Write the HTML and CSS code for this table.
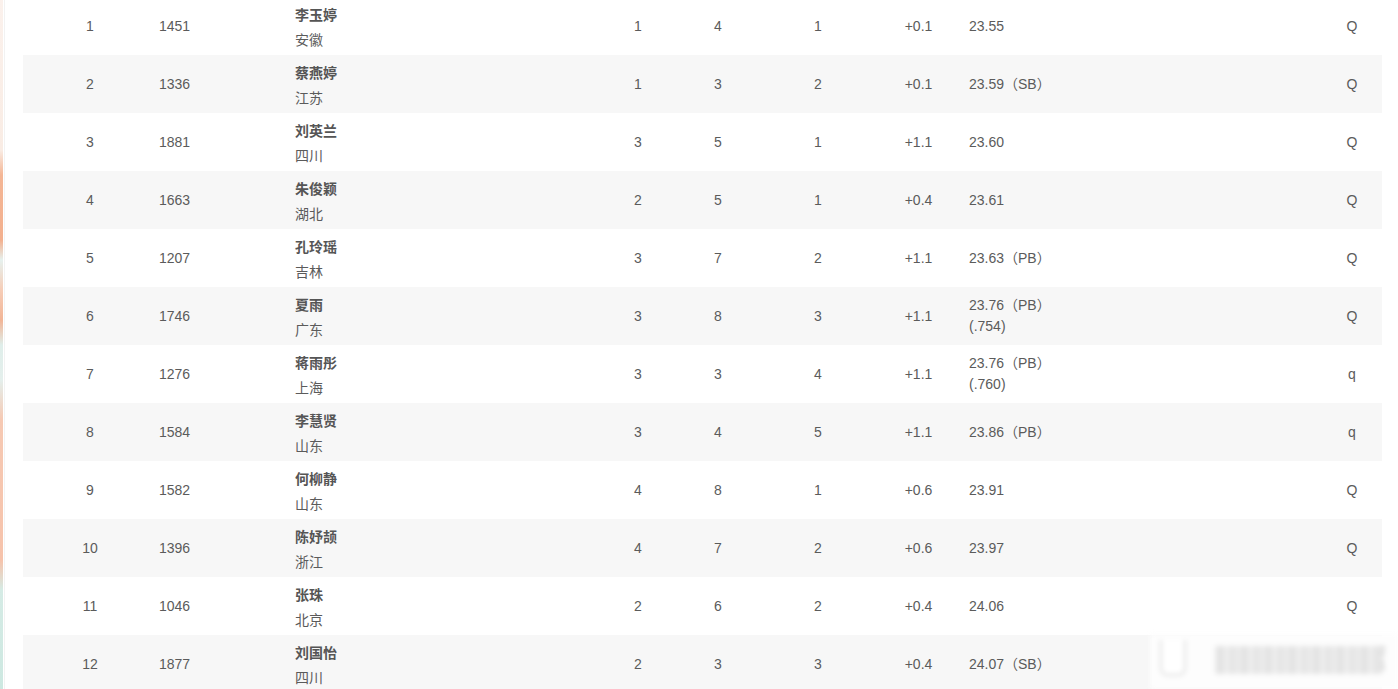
FILE: index.html
```html
<!DOCTYPE html>
<html lang="zh-CN">
<head>
<meta charset="utf-8">
<title>成绩</title>
<link rel="stylesheet" href="styles.css">
</head>
<body>
<div class="edge"></div>
<div class="page">
  <div class="table">
    <div class="row"><div class="c rank">1</div><div class="c bib">1451</div><div class="c name"><div class="nm">李玉婷</div><div class="team">安徽</div></div><div class="c">1</div><div class="c">4</div><div class="c">1</div><div class="c">+0.1</div><div class="c res">23.55</div><div class="c"></div><div class="c qual">Q</div></div>
    <div class="row"><div class="c rank">2</div><div class="c bib">1336</div><div class="c name"><div class="nm">蔡燕婷</div><div class="team">江苏</div></div><div class="c">1</div><div class="c">3</div><div class="c">2</div><div class="c">+0.1</div><div class="c res">23.59（SB）</div><div class="c"></div><div class="c qual">Q</div></div>
    <div class="row"><div class="c rank">3</div><div class="c bib">1881</div><div class="c name"><div class="nm">刘英兰</div><div class="team">四川</div></div><div class="c">3</div><div class="c">5</div><div class="c">1</div><div class="c">+1.1</div><div class="c res">23.60</div><div class="c"></div><div class="c qual">Q</div></div>
    <div class="row"><div class="c rank">4</div><div class="c bib">1663</div><div class="c name"><div class="nm">朱俊颖</div><div class="team">湖北</div></div><div class="c">2</div><div class="c">5</div><div class="c">1</div><div class="c">+0.4</div><div class="c res">23.61</div><div class="c"></div><div class="c qual">Q</div></div>
    <div class="row"><div class="c rank">5</div><div class="c bib">1207</div><div class="c name"><div class="nm">孔玲瑶</div><div class="team">吉林</div></div><div class="c">3</div><div class="c">7</div><div class="c">2</div><div class="c">+1.1</div><div class="c res">23.63（PB）</div><div class="c"></div><div class="c qual">Q</div></div>
    <div class="row"><div class="c rank">6</div><div class="c bib">1746</div><div class="c name"><div class="nm">夏雨</div><div class="team">广东</div></div><div class="c">3</div><div class="c">8</div><div class="c">3</div><div class="c">+1.1</div><div class="c res">23.76（PB）(.754)</div><div class="c"></div><div class="c qual">Q</div></div>
    <div class="row"><div class="c rank">7</div><div class="c bib">1276</div><div class="c name"><div class="nm">蒋雨彤</div><div class="team">上海</div></div><div class="c">3</div><div class="c">3</div><div class="c">4</div><div class="c">+1.1</div><div class="c res">23.76（PB）(.760)</div><div class="c"></div><div class="c qual">q</div></div>
    <div class="row"><div class="c rank">8</div><div class="c bib">1584</div><div class="c name"><div class="nm">李慧贤</div><div class="team">山东</div></div><div class="c">3</div><div class="c">4</div><div class="c">5</div><div class="c">+1.1</div><div class="c res">23.86（PB）</div><div class="c"></div><div class="c qual">q</div></div>
    <div class="row"><div class="c rank">9</div><div class="c bib">1582</div><div class="c name"><div class="nm">何柳静</div><div class="team">山东</div></div><div class="c">4</div><div class="c">8</div><div class="c">1</div><div class="c">+0.6</div><div class="c res">23.91</div><div class="c"></div><div class="c qual">Q</div></div>
    <div class="row"><div class="c rank">10</div><div class="c bib">1396</div><div class="c name"><div class="nm">陈妤颉</div><div class="team">浙江</div></div><div class="c">4</div><div class="c">7</div><div class="c">2</div><div class="c">+0.6</div><div class="c res">23.97</div><div class="c"></div><div class="c qual">Q</div></div>
    <div class="row"><div class="c rank">11</div><div class="c bib">1046</div><div class="c name"><div class="nm">张珠</div><div class="team">北京</div></div><div class="c">2</div><div class="c">6</div><div class="c">2</div><div class="c">+0.4</div><div class="c res">24.06</div><div class="c"></div><div class="c qual">Q</div></div>
    <div class="row"><div class="c rank">12</div><div class="c bib">1877</div><div class="c name"><div class="nm">刘国怡</div><div class="team">四川</div></div><div class="c">2</div><div class="c">3</div><div class="c">3</div><div class="c">+0.4</div><div class="c res">24.07（SB）</div><div class="c"></div><div class="c qual">Q</div></div>
  </div>
</div>
<div class="watermark">
  <div class="wm-pill"></div>
  <div class="wm-bars"></div>
  <div class="wm-digits"><span>2</span><span>1</span></div>
</div>
</body>
</html>
```
FILE: styles.css
```css
html, body {
  margin: 0;
  padding: 0;
  background: #ffffff;
  overflow: hidden;
}
body {
  font-family: "Liberation Sans", "Noto Sans CJK SC", sans-serif;
  font-size: 14px;
  color: #5b5b5b;
  height: 689px;
  position: relative;
}
.edge {
  position: absolute;
  left: 0;
  top: 0;
  width: 3px;
  height: 689px;
  background: linear-gradient(to bottom,
    #fbf1ec 0px, #f9ece4 150px, #f4b695 175px, #f3b08e 240px,
    #e6f1ee 260px, #f6cdb7 290px, #f2b596 320px, #dfeeea 345px,
    #e4efec 380px, #f6c9b3 420px, #f6c3ab 560px, #d5ebe5 590px,
    #cde8e1 689px);
}
.edge::after {
  content: "";
  position: absolute;
  left: 4px;
  top: 0;
  width: 1px;
  height: 100%;
  background: #f2f2f2;
}
.page {
  padding-left: 23px;
  margin-top: -3px;
}
.table {
  width: 1359px;
}
.row {
  display: grid;
  grid-template-columns: 134px 138px 295px 96px 64px 136px 65px 108px 1fr 62px;
  height: 58px;
  align-items: center;
  background: #ffffff;
}
.row:nth-child(even) {
  background: #f7f7f7;
}
.c {
  text-align: center;
  line-height: 21px;
}
.bib {
  text-align: left;
  padding-left: 2px;
}
.name {
  text-align: left;
  padding-top: 3px;
}
.nm {
  font-weight: 700;
  line-height: 25px;
  color: #555555;
}
.team {
  line-height: 25px;
}
.res {
  text-align: left;
  padding-left: 18px;
  padding-right: 12px;
}
.qual {
  padding-left: 2px;
}
.watermark {
  position: absolute;
  left: 1150px;
  top: 634px;
  width: 248px;
  height: 55px;
  background: #fdfdfd;
  filter: blur(2.5px);
}
.wm-pill {
  position: absolute;
  left: 10px;
  top: 6px;
  width: 22px;
  height: 34px;
  background: #ffffff;
  border: 2px solid #e0e0e0;
  border-top: none;
  border-radius: 0 0 8px 8px;
}
.wm-bars {
  position: absolute;
  left: 65px;
  top: 12px;
  width: 168px;
  height: 28px;
  background: repeating-linear-gradient(to right,
    #ebebeb 0px, #e0e0e0 6px, #f0f0f0 11px, #e3e3e3 17px, #eeeeee 24px);
}
.wm-digits {
  position: absolute;
  right: 12px;
  top: 10px;
  display: flex;
  flex-direction: column;
  font-size: 12px;
  line-height: 14px;
  color: #c4c4c4;
}
```
